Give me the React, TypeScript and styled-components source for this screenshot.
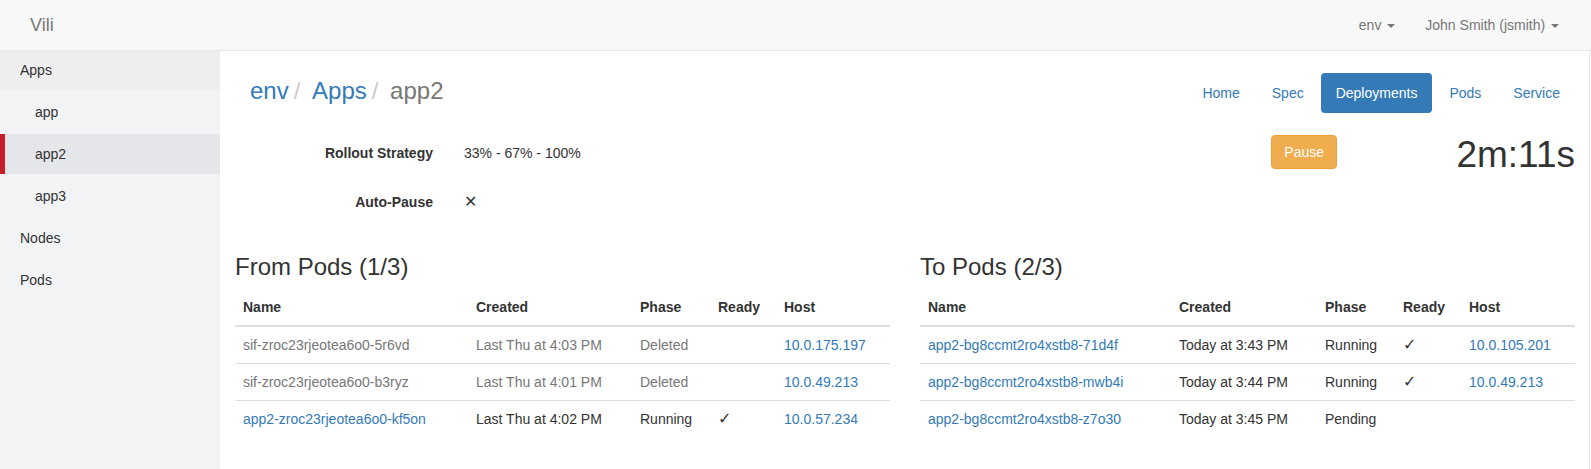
import React from 'react';
import styled, { createGlobalStyle } from 'styled-components';

const GlobalStyle = createGlobalStyle`
  html, body { margin: 0; padding: 0; background: #fff; }
  body {
    font-family: "Liberation Sans", Arial, sans-serif;
    font-size: 14px;
    line-height: 20px;
    color: #333;
  }
  * { box-sizing: border-box; }
  a { text-decoration: none; }
`;

const Page = styled.div`
  display: flex;
  flex-direction: column;
  min-height: 100vh;
`;

const Navbar = styled.header`
  height: 51px;
  background: #f8f8f8;
  border-bottom: 1px solid #e7e7e7;
  display: flex;
  justify-content: space-between;
  padding: 0 17px 0 15px;
`;

const Brand = styled.a`
  padding: 15px;
  font-size: 18px;
  line-height: 20px;
  color: #777;
`;

const NavMenu = styled.nav`
  display: flex;
`;

const NavLink = styled.a`
  padding: 15px;
  line-height: 20px;
  color: #777;
  white-space: pre;
`;

const Caret = styled.span`
  display: inline-block;
  width: 0;
  height: 0;
  margin-left: 2px;
  vertical-align: middle;
  border-top: 4px solid #777;
  border-right: 4px solid transparent;
  border-left: 4px solid transparent;
`;

const Body = styled.div`
  flex: 1;
  display: flex;
`;

const Sidebar = styled.aside`
  width: 220px;
  flex-shrink: 0;
  background: #f2f3f5;
  display: flex;
  flex-direction: column;
  gap: 2px;
`;

const SideItem = styled.a<{ $level: number; $active?: boolean; $section?: boolean }>`
  display: block;
  color: #333;
  line-height: 20px;
  padding: ${(p) => (p.$section ? '9px' : '10px')} 15px 10px ${(p) => (p.$level === 1 ? 30 : 15)}px;
  border-left: 5px solid ${(p) => (p.$active ? '#c51f2a' : 'transparent')};
  background: ${(p) => (p.$active ? '#e5e6e9' : p.$section ? '#eeeeee' : 'transparent')};
`;

const Main = styled.main`
  flex: 1;
  padding: 19px 14px 0 15px;
  border-right: 1px solid #e7e7e7;
  margin-right: 1px;
`;

const Header = styled.div`
  display: flex;
  justify-content: space-between;
  align-items: flex-start;
`;

const Breadcrumb = styled.ol`
  list-style: none;
  margin: 0;
  padding: 8px 15px;
  font-size: 24px;
  line-height: 26px;
  display: flex;
`;

const Crumb = styled.li<{ $first?: boolean; $current?: boolean }>`
  color: ${(p) => (p.$current ? '#777' : '#337ab7')};
  white-space: pre;
  &::before {
    content: ${(p) => (p.$first ? "''" : "'/\\00a0'")};
    padding: ${(p) => (p.$first ? '0' : '0 5px')};
    color: #ccc;
  }
`;

const CrumbLink = styled.a`
  color: #337ab7;
`;

const Pills = styled.ul`
  list-style: none;
  margin: 3px 0 0;
  padding: 0;
  display: flex;
  gap: 2px;
`;

const Pill = styled.a<{ $active?: boolean }>`
  display: block;
  padding: 10px 15px;
  line-height: 20px;
  border-radius: 4px;
  color: ${(p) => (p.$active ? '#fff' : '#337ab7')};
  background: ${(p) => (p.$active ? '#337ab7' : 'transparent')};
`;

const Details = styled.div`
  margin-top: 22px;
  display: flex;
  align-items: flex-start;
`;

const Form = styled.div`
  flex: 1;
  display: grid;
  grid-template-columns: 198px 1fr;
  column-gap: 31px;
  row-gap: 15px;
  padding: 1px 0 15px;
`;

const FieldLabel = styled.div`
  font-weight: bold;
  text-align: right;
  padding-top: 7px;
  min-height: 34px;
`;

const FieldValue = styled.div`
  padding: 7px 0;
  min-height: 34px;
`;

const Cross = styled.span`
  font-family: "DejaVu Sans", sans-serif;
  font-size: 16px;
  font-weight: 300;
`;

const PauseButton = styled.button`
  font-family: inherit;
  font-size: 14px;
  line-height: 20px;
  padding: 6px 12px;
  color: #fff;
  background: #f0ad4e;
  border: 1px solid #eea236;
  border-radius: 4px;
`;

const Timer = styled.div`
  width: 238px;
  text-align: right;
  font-size: 37px;
  line-height: 40px;
  color: #333;
`;

const Columns = styled.div`
  display: grid;
  grid-template-columns: 1fr 1fr;
  column-gap: 30px;
`;

const Section = styled.section``;

const Heading = styled.h3`
  margin: 20px 0 9px;
  font-size: 24px;
  line-height: 26px;
  font-weight: 500;
  color: #333;
`;

const Table = styled.table`
  width: 100%;
  border-collapse: collapse;
  table-layout: fixed;
`;

const Th = styled.th`
  text-align: left;
  padding: 8px;
  line-height: 20px;
  border-bottom: 2px solid #ddd;
  vertical-align: bottom;
`;

const Td = styled.td<{ $muted?: boolean }>`
  padding: 8px;
  line-height: 20px;
  border-top: 1px solid #ddd;
  color: ${(p) => (p.$muted ? '#777' : '#333')};
  white-space: nowrap;
`;

const Link = styled.a`
  color: #337ab7;
`;

const Check = styled.span`
  font-family: "DejaVu Sans", sans-serif;
  font-size: 16px;
`;

type Pod = {
  name: string;
  created: string;
  phase: string;
  ready: boolean;
  host: string;
  muted?: boolean;
};

const fromPods: Pod[] = [
  { name: 'sif-zroc23rjeotea6o0-5r6vd', created: 'Last Thu at 4:03 PM', phase: 'Deleted', ready: false, host: '10.0.175.197', muted: true },
  { name: 'sif-zroc23rjeotea6o0-b3ryz', created: 'Last Thu at 4:01 PM', phase: 'Deleted', ready: false, host: '10.0.49.213', muted: true },
  { name: 'app2-zroc23rjeotea6o0-kf5on', created: 'Last Thu at 4:02 PM', phase: 'Running', ready: true, host: '10.0.57.234' },
];

const toPods: Pod[] = [
  { name: 'app2-bg8ccmt2ro4xstb8-71d4f', created: 'Today at 3:43 PM', phase: 'Running', ready: true, host: '10.0.105.201' },
  { name: 'app2-bg8ccmt2ro4xstb8-mwb4i', created: 'Today at 3:44 PM', phase: 'Running', ready: true, host: '10.0.49.213' },
  { name: 'app2-bg8ccmt2ro4xstb8-z7o30', created: 'Today at 3:45 PM', phase: 'Pending', ready: false, host: '' },
];

function PodTable({ title, pods, widths }: { title: string; pods: Pod[]; widths: number[] }) {
  return (
    <Section>
      <Heading>{title}</Heading>
      <Table>
        <colgroup>
          {widths.map((w, i) => (
            <col key={i} style={{ width: w }} />
          ))}
        </colgroup>
        <thead>
          <tr>
            <Th>Name</Th>
            <Th>Created</Th>
            <Th>Phase</Th>
            <Th>Ready</Th>
            <Th>Host</Th>
          </tr>
        </thead>
        <tbody>
          {pods.map((p) => (
            <tr key={p.name}>
              <Td $muted={p.muted}>{p.muted ? p.name : <Link href="#">{p.name}</Link>}</Td>
              <Td $muted={p.muted}>{p.created}</Td>
              <Td $muted={p.muted}>{p.phase}</Td>
              <Td $muted={p.muted}>{p.ready ? <Check>✓</Check> : null}</Td>
              <Td $muted={p.muted}>{p.host ? <Link href="#">{p.host}</Link> : null}</Td>
            </tr>
          ))}
        </tbody>
      </Table>
    </Section>
  );
}

export default function App() {
  return (
    <Page>
      <GlobalStyle />
      <Navbar>
        <Brand href="#">Vili</Brand>
        <NavMenu>
          <NavLink href="#">
            env <Caret />
          </NavLink>
          <NavLink href="#">
            John Smith (jsmith) <Caret />
          </NavLink>
        </NavMenu>
      </Navbar>
      <Body>
        <Sidebar>
          <SideItem href="#" $level={0} $section>
            Apps
          </SideItem>
          <SideItem href="#" $level={1}>
            app
          </SideItem>
          <SideItem href="#" $level={1} $active>
            app2
          </SideItem>
          <SideItem href="#" $level={1}>
            app3
          </SideItem>
          <SideItem href="#" $level={0}>
            Nodes
          </SideItem>
          <SideItem href="#" $level={0}>
            Pods
          </SideItem>
        </Sidebar>
        <Main>
          <Header>
            <Breadcrumb>
              <Crumb $first>
                <CrumbLink href="#">env</CrumbLink>
              </Crumb>
              <Crumb>
                <CrumbLink href="#">Apps</CrumbLink>
              </Crumb>
              <Crumb $current>app2</Crumb>
            </Breadcrumb>
            <Pills>
              <li><Pill href="#">Home</Pill></li>
              <li><Pill href="#">Spec</Pill></li>
              <li><Pill href="#" $active>Deployments</Pill></li>
              <li><Pill href="#">Pods</Pill></li>
              <li><Pill href="#">Service</Pill></li>
            </Pills>
          </Header>
          <Details>
            <Form>
              <FieldLabel>Rollout Strategy</FieldLabel>
              <FieldValue>33% - 67% - 100%</FieldValue>
              <FieldLabel>Auto-Pause</FieldLabel>
              <FieldValue>
                <Cross>✕</Cross>
              </FieldValue>
            </Form>
            <PauseButton type="button">Pause</PauseButton>
            <Timer>2m:11s</Timer>
          </Details>
          <Columns>
            <PodTable title="From Pods (1/3)" pods={fromPods} widths={[233, 164, 78, 66, 114]} />
            <PodTable title="To Pods (2/3)" pods={toPods} widths={[251, 146, 78, 66, 114]} />
          </Columns>
        </Main>
      </Body>
    </Page>
  );
}
